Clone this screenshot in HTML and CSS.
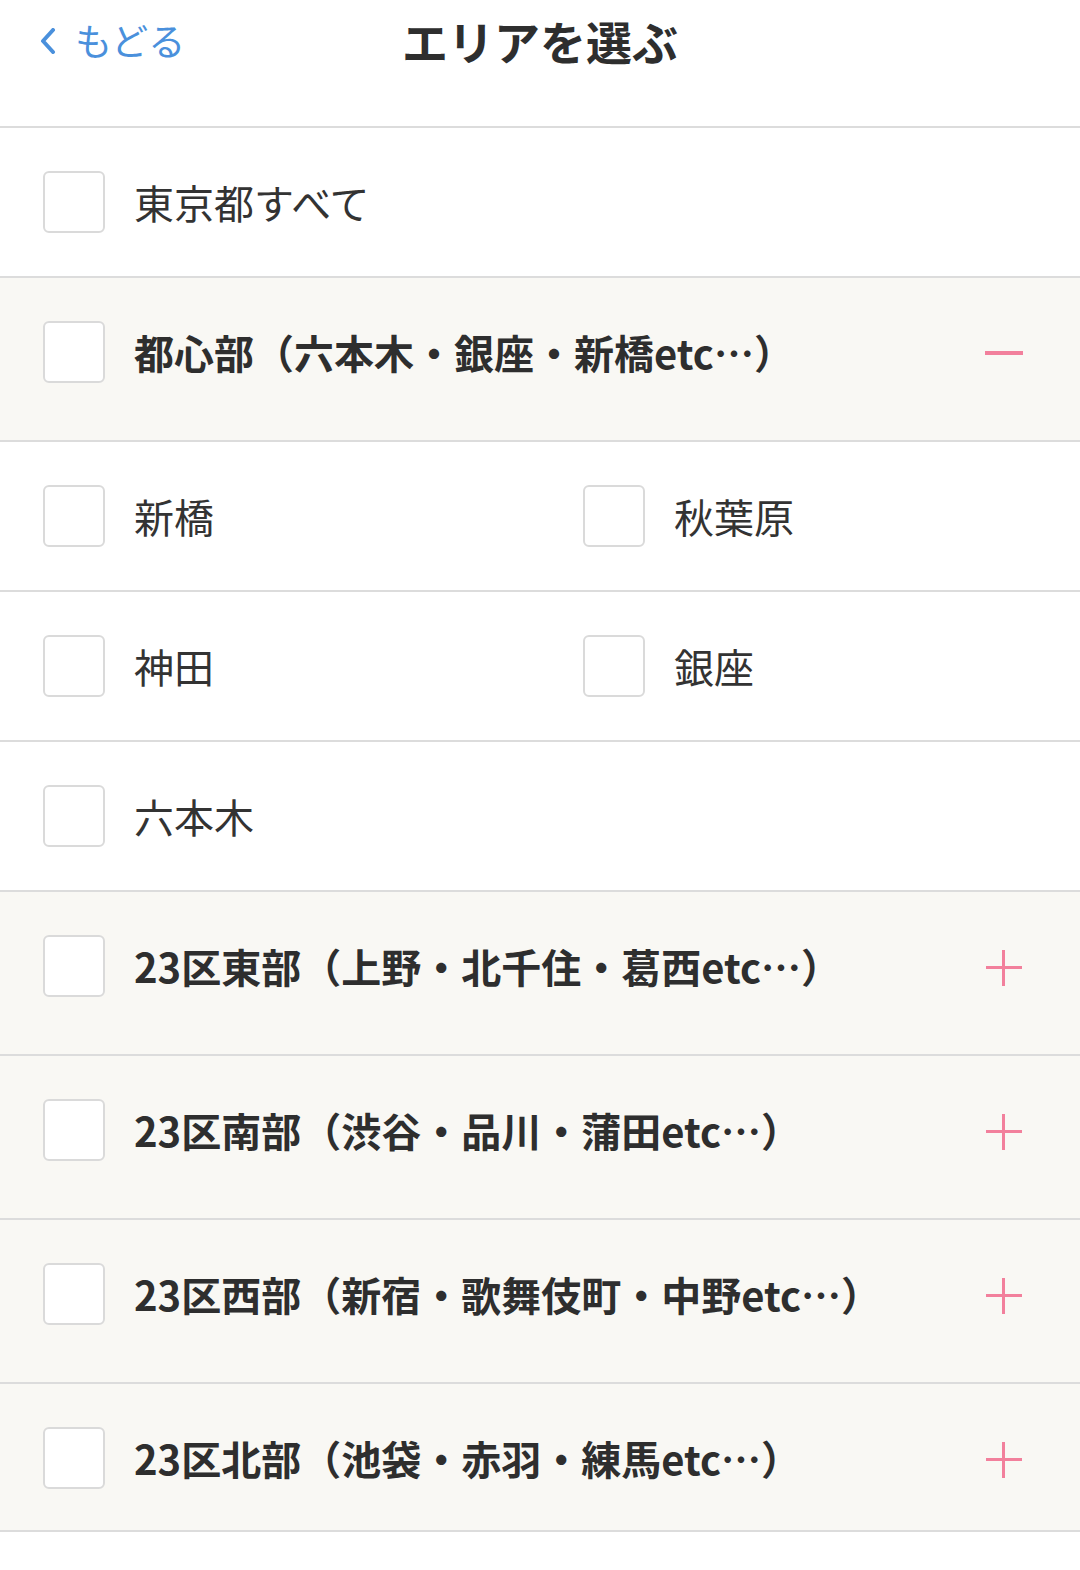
FILE: index.html
```html
<!DOCTYPE html>
<html lang="ja">
<head>
<meta charset="utf-8">
<link rel="stylesheet" href="styles.css">
</head>
<body>
<header class="header">
  <a class="back">
    <svg class="chev" width="16" height="26" viewBox="0 0 16 26"><path d="M13 2 L3 13 L13 24" fill="none" stroke="#4a90dc" stroke-width="4" stroke-linecap="round" stroke-linejoin="round"/></svg>
    <span>もどる</span>
  </a>
  <h1 class="title">エリアを選ぶ</h1>
</header>
<ul class="list">
  <li class="row"><span class="cb"></span><span class="label">東京都すべて</span></li>
  <li class="group"><span class="cb"></span><span class="glabel">都心部（六本木・銀座・新橋etc…）</span><span class="minus"></span></li>
  <li class="row pair">
    <div class="cell"><span class="cb"></span><span class="label">新橋</span></div>
    <div class="cell"><span class="cb"></span><span class="label">秋葉原</span></div>
  </li>
  <li class="row pair">
    <div class="cell"><span class="cb"></span><span class="label">神田</span></div>
    <div class="cell"><span class="cb"></span><span class="label">銀座</span></div>
  </li>
  <li class="row pair">
    <div class="cell"><span class="cb"></span><span class="label">六本木</span></div>
  </li>
  <li class="group"><span class="cb"></span><span class="glabel">23区東部（上野・北千住・葛西etc…）</span><span class="plus"></span></li>
  <li class="group"><span class="cb"></span><span class="glabel">23区南部（渋谷・品川・蒲田etc…）</span><span class="plus"></span></li>
  <li class="group"><span class="cb"></span><span class="glabel">23区西部（新宿・歌舞伎町・中野etc…）</span><span class="plus"></span></li>
  <li class="group last"><span class="cb"></span><span class="glabel">23区北部（池袋・赤羽・練馬etc…）</span><span class="plus"></span></li>
</ul>
</body>
</html>
```
FILE: styles.css
```css
* { box-sizing: border-box; }
html, body {
  margin: 0;
  padding: 0;
  background: #fff;
  font-family: "Noto Sans CJK JP", "Noto Sans", sans-serif;
  color: #333;
}
.header {
  position: relative;
  height: 128px;
  border-bottom: 2px solid #dcdcdc;
}
.back {
  position: absolute;
  left: 40px;
  top: 15px;
  display: flex;
  align-items: center;
  gap: 19px;
  color: #4a90dc;
  font-size: 37px;
  line-height: 50px;
}
.chev { display: block; margin-top: 2px; }
.title {
  margin: 0;
  padding-top: 10px;
  text-align: center;
  font-size: 46px;
  font-weight: 700;
  line-height: 60px;
  color: #2e2e2e;
}
.list {
  list-style: none;
  margin: 0;
  padding: 0;
}
.row {
  height: 150px;
  border-bottom: 2px solid #dcdcdc;
  display: flex;
  align-items: center;
  padding-left: 43px;
}
.row.pair {
  padding-left: 0;
  display: grid;
  grid-template-columns: 1fr 1fr;
  align-items: center;
}
.cell {
  display: flex;
  align-items: center;
  padding-left: 43px;
}
.cb {
  flex: none;
  width: 62px;
  height: 62px;
  background: #fff;
  border: 2px solid #dadada;
  border-radius: 6px;
  margin-right: 29px;
}
.label {
  font-size: 40px;
  line-height: 1;
  color: #333;
}
.group {
  height: 164px;
  background: #f9f8f4;
  border-bottom: 2px solid #dcdcdc;
  display: flex;
  align-items: flex-start;
  padding: 43px 0 0 43px;
}
.group.last { height: 148px; }
.glabel {
  font-size: 40px;
  font-weight: 700;
  line-height: 62px;
  color: #2e2e2e;
  flex: 1;
  white-space: nowrap;
}
.minus, .plus {
  flex: none;
  position: relative;
  width: 38px;
  height: 38px;
  margin: 14px 57px 0 0;
}
.minus::before, .plus::before, .plus::after {
  content: "";
  position: absolute;
  background: #f2809c;
}
.minus::before {
  left: 0; right: 0; top: 16px; height: 4px;
}
.plus::before {
  left: 1px; right: 1px; top: 17px; height: 3px;
}
.plus::after {
  top: 1px; bottom: 1px; left: 17px; width: 3px;
}
```
